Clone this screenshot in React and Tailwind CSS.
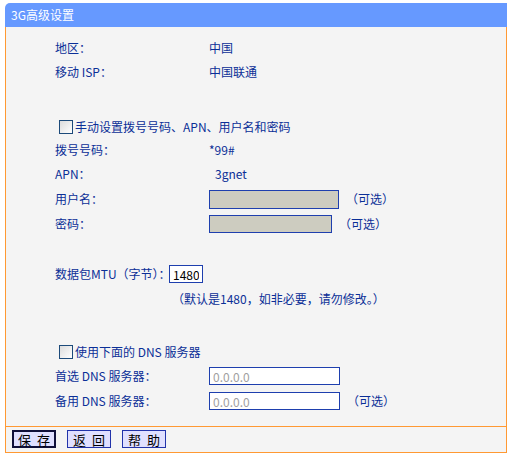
const FONT = { fontFamily: '"Noto Sans CJK SC", "Liberation Sans", sans-serif' };

const Checkbox = () => (
  <span className="inline-block w-[14px] h-[14px] border border-[#1c4a7a] bg-gradient-to-br from-[#dcdcdc] to-white mr-[2px]" />
);

const Optional = () => <span className="ml-[7px] whitespace-nowrap">（可选）</span>;

const Row = ({ label, h = 'h-[24px]', children }) => (
  <div className={`flex items-center ${h}`}>
    <div className="w-[154px] shrink-0 whitespace-nowrap">{label}</div>
    <div className="flex items-center">{children}</div>
  </div>
);

const Button = ({ chars, primary }) => (
  <button
    className={`w-[44px] h-[18px] bg-[#e0e0ff] text-black text-[13px] leading-none flex items-center justify-center gap-[6px] ${primary ? 'border-2 border-[#10103a]' : 'border border-[#2233aa]'}`}
    style={FONT}
  >
    <span>{chars[0]}</span>
    <span>{chars[1]}</span>
  </button>
);

const App = () => {
  return (
    <div className="w-[510px] h-[456px] bg-white pt-[3px] pl-[5px] text-[12px] leading-none text-[#0b2f97]" style={FONT}>
      <div className="w-[502px]">
        <div className="h-[24px] bg-[#6699ff] rounded-tl-[5px] flex items-center pl-[6px] text-white text-[12px]">
          3G高级设置
        </div>
        <div className="h-[400px] bg-[#f4f4f4] border-x border-b border-[#ff9933] pl-[49px] pt-[9px]">
          <Row label="地区：">中国</Row>
          <Row label="移动 ISP：">中国联通</Row>

          <div className="flex items-center h-[23px] mt-[31px] pl-[4px] whitespace-nowrap">
            <Checkbox />
            手动设置拨号号码、APN、用户名和密码
          </div>
          <Row label="拨号号码：">*99#</Row>
          <Row label="APN："><span className="pl-[6px]">3gnet</span></Row>
          <Row label="用户名：" h="h-[26px]">
            <span className="w-[130px] h-[19px] border border-[#1e3fae] bg-[#cdccc0]" />
            <Optional />
          </Row>
          <Row label="密码：">
            <span className="w-[123px] h-[18px] border border-[#1e3fae] bg-[#cdccc0]" />
            <Optional />
          </Row>

          <div className="flex items-center h-[24px] mt-[26px]">
            <span className="w-[114px] shrink-0 whitespace-nowrap">数据包MTU（字节）：</span>
            <input
              readOnly
              value="1480"
              className="w-[34px] h-[18px] border border-[#1e3fae] bg-white text-black text-[12px] px-[3px] outline-none"
              style={FONT}
            />
          </div>
          <div className="flex items-center h-[24px] mt-[1px] pl-[117px] whitespace-nowrap">
            （默认是1480，如非必要，请勿修改。）
          </div>

          <div className="flex items-center h-[24px] mt-[29px] pl-[4px] whitespace-nowrap">
            <Checkbox />
            使用下面的 DNS 服务器
          </div>
          <Row label="首选 DNS 服务器：">
            <input
              readOnly
              placeholder="0.0.0.0"
              className="w-[131px] h-[18px] border border-[#1e3fae] bg-white text-[12px] px-[3px] placeholder:text-[#a0a0a0] outline-none"
              style={FONT}
            />
          </Row>
          <Row label="备用 DNS 服务器：" h="h-[26px]">
            <input
              readOnly
              placeholder="0.0.0.0"
              className="w-[131px] h-[18px] border border-[#1e3fae] bg-white text-[12px] px-[3px] placeholder:text-[#a0a0a0] outline-none"
              style={FONT}
            />
            <Optional />
          </Row>
        </div>
        <div className="h-[26px] bg-[#f4f4f4] border-x border-b border-[#ff9933] flex items-start pt-[3px] pl-[6px] gap-[11px]">
          <Button primary chars="保存" />
          <Button chars="返回" />
          <Button chars="帮助" />
        </div>
      </div>
    </div>
  );
};

export default App;
